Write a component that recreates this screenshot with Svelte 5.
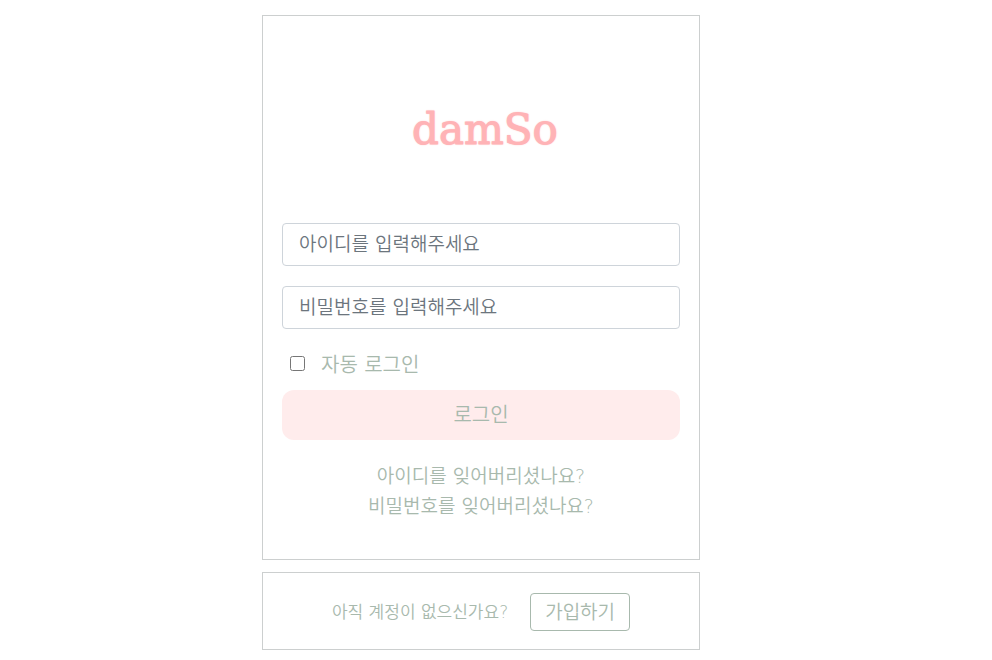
<script>
  let userId = $state('');
  let password = $state('');
  let remember = $state(false);
</script>

<main>
  <section class="card login">
    <h1>damSo</h1>
    <form onsubmit={(e) => e.preventDefault()}>
      <input class="field" type="text" aria-label="아이디" placeholder="아이디를 입력해주세요" bind:value={userId} />
      <input class="field" type="password" aria-label="비밀번호" placeholder="비밀번호를 입력해주세요" bind:value={password} />
      <label class="check">
        <input type="checkbox" bind:checked={remember} />
        <span>자동 로그인</span>
      </label>
      <button class="submit" type="submit">로그인</button>
    </form>
    <nav>
      <a href="#find-id">아이디를 잊어버리셨나요?</a>
      <a href="#find-password">비밀번호를 잊어버리셨나요?</a>
    </nav>
  </section>
  <section class="card join">
    <span>아직 계정이 없으신가요?</span>
    <button type="button">가입하기</button>
  </section>
</main>

<style>
  :global(body) {
    margin: 0;
    background: #fff;
  }
  main,
  input,
  button {
    font-family: "DejaVu Sans", "Noto Sans CJK KR", sans-serif;
    font-weight: 350;
  }
  main {
    padding: 15px 30px 10px 0;
    display: flex;
    flex-direction: column;
    align-items: center;
    gap: 12px;
    color: #a8b9ad;
  }
  .card {
    box-sizing: border-box;
    width: 100%;
    max-width: 438px;
    border: 1px solid #cccfcf;
  }
  .login {
    padding: 74px 19px 38px;
  }
  h1 {
    margin: 0 0 53px;
    padding-left: 8px;
    font: 400 42px/80px "DejaVu Serif", serif;
    text-align: center;
    color: #ffb3b6;
    -webkit-text-stroke: 1px #ffb3b6;
    text-shadow: 0 0 2px #ffb3b6;
  }
  form {
    display: flex;
    flex-direction: column;
  }
  .field {
    box-sizing: border-box;
    width: 100%;
    height: 43px;
    margin: 0 0 20px;
    padding: 0 16px 2px;
    border: 1px solid #ced4da;
    border-radius: 4px;
    font-size: 19px;
    color: #495057;
  }
  .field::placeholder {
    color: #6c757d;
    opacity: 1;
  }
  .check {
    display: flex;
    align-items: center;
    gap: 16px;
    height: 28px;
    padding-left: 8px;
    font-size: 20px;
  }
  .check input {
    width: 15px;
    height: 15px;
    margin: 0;
  }
  .submit {
    height: 50px;
    margin-top: 13px;
    padding: 0 0 4px;
    border: 0;
    border-radius: 12px;
    background: #ffecec;
    color: #a8b9ad;
    font-size: 20px;
  }
  nav {
    display: flex;
    flex-direction: column;
    align-items: center;
    margin-top: 21px;
    font-size: 19px;
    line-height: 30px;
  }
  a {
    color: inherit;
    text-decoration: none;
  }
  .join {
    display: flex;
    justify-content: center;
    align-items: center;
    gap: 22px;
    padding: 20px 0 18px;
    font-size: 17px;
  }
  .join span {
    padding-bottom: 4px;
  }
  .join button {
    box-sizing: border-box;
    height: 38px;
    padding: 0 14px 4px;
    border: 1px solid #a8b9ad;
    border-radius: 4px;
    background: #fff;
    color: #a8b9ad;
    font-size: 19px;
  }
</style>
